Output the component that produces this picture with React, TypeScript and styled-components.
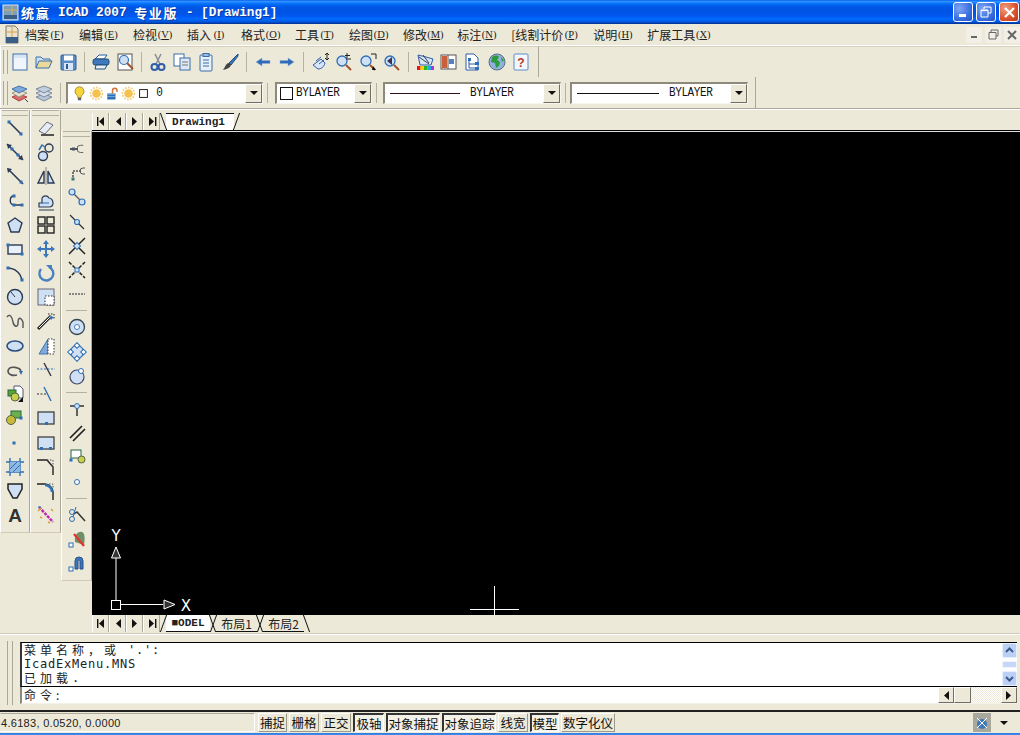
import React from "react";
import styled, { createGlobalStyle } from "styled-components";

const Global = createGlobalStyle`
  html, body { margin: 0; padding: 0; background: #ece9d8; overflow: hidden; }
  * { box-sizing: border-box; }
`;
const cjk = `"Noto Sans CJK SC", "Liberation Sans", sans-serif`;
const D = "#2b3a55", B = "#2f6fb5", L = "#cfe0f5", M = "#7fa8dc", G = "#555";

const Win = styled.div`
  width: 1020px; height: 735px; background: #ece9d8; display: flex; flex-direction: column;
  overflow: hidden; font-family: ${cjk}; color: #111;
`;
const TitleBar = styled.div`
  height: 24px; flex: none; display: flex; align-items: center; padding: 0 1px 0 2px;
  background: linear-gradient(#0058ee 0%, #3593ff 5%, #288eff 8%, #127dff 12%, #036ffc 16%, #0262ee 22%, #0057e5 30%, #0054e3 40%, #0055eb 60%, #005bf5 70%, #026afe 78%, #0062ef 86%, #0052d6 92%, #0040ab 96%, #003092 100%);
`;
const TitleText = styled.div`
  flex: 1; margin-left: 2px; color: #fff; font: bold 12.7px "Liberation Mono", monospace; white-space: pre; letter-spacing: 0;
  text-shadow: 1px 1px 0 #0f3a9c; display: flex; align-items: center;
`;
const TitleCjk = styled.span`
  font: bold 13px ${cjk}; letter-spacing: 1.7px;
`;
const CapBtn = styled.div<{ $red?: boolean }>`
  width: 20px; height: 20px; margin-left: 3px; border: 1px solid #fff; border-radius: 3px;
  display: flex; align-items: center; justify-content: center;
  background: ${p => p.$red
    ? "radial-gradient(circle at 30% 30%, #f0a080, #d9512c 60%, #b93a16)"
    : "radial-gradient(circle at 30% 30%, #7fa6f2, #3a6fe0 60%, #2353c4)"};
`;
const MenuBar = styled.div`
  height: 22px; flex: none; display: flex; align-items: center; padding-left: 4px; border-bottom: 1px solid #fff; box-shadow: 0 1px 0 #d4d0bc;
`;
const MenuList = styled.div`
  display: flex; gap: 14px; margin-left: 6px; flex: 1;
`;
const MenuItem = styled.div`
  font-size: 12px; line-height: 16px; white-space: nowrap; color: #222; display: flex; align-items: center;
`;
const Accel = styled.span`
  display: inline-block; width: 16px; text-align: center; white-space: nowrap; font: 10.5px "Liberation Serif", serif; letter-spacing: 0;
  u { text-decoration: underline; }
`;
const MdiBtn = styled.div`
  width: 16px; height: 16px; margin-left: 3px; display: flex; align-items: center; justify-content: center; background: #f2f0e6;
`;
const ToolRow = styled.div`
  height: 31px; flex: none; display: flex; align-items: stretch;
`;
const ToolRowRule = styled(ToolRow)`
  border-bottom: 1px solid #aca899; box-shadow: 0 1px 0 #fff; height: 32px;
`;
const ToolBand = styled.div<{ $w: number }>`
  width: ${p => p.$w}px; display: flex; align-items: center; padding-left: 2px; border-right: 1px solid #aca899; border-left: 1px solid #fff; position: relative;
`;
const VGrip = styled.div`
  width: 5px; height: 24px; flex: none; margin-right: 0; border-left: 1px solid #aca899; border-right: 1px solid #aca899;
`;
const ToolBtn = styled.div`
  width: 24px; height: 24px; flex: none; display: flex; align-items: center; justify-content: center;
`;
const Sep = styled.div`
  width: 9px; height: 24px; flex: none; position: relative;
  &::after { content: ""; position: absolute; left: 4px; top: 2px; bottom: 2px; width: 1px; background: #b5b2a2; }
`;
const Combo = styled.div<{ $w: number; $ml?: number }>`
  width: ${p => p.$w}px; margin-left: ${p => p.$ml ?? 0}px; height: 22px; flex: none; background: #fff; display: flex; align-items: center;
  border: 1px solid; border-color: #8d8a7c #f6f5ee #f6f5ee #8d8a7c; border-left-width: 2px; border-top-width: 2px;
`;
const ComboBody = styled.div`
  flex: 1; display: flex; align-items: center; height: 100%; padding-left: 3px; min-width: 0;
`;
const ComboArrow = styled.div`
  width: 17px; height: 19px; flex: none; background: #ece9d8; border: 1px solid; border-color: #fff #716f64 #716f64 #fff;
  display: flex; align-items: center; justify-content: center;
`;
const DropTri = styled.i`
  display: block; width: 0; height: 0; border: 4px solid transparent; border-top: 4px solid #111; border-bottom: 0;
`;
const ComboText = styled.span`
  font: 11px "Liberation Mono", monospace; letter-spacing: -0.4px; color: #111; white-space: pre; transform: scaleY(1.1);
`;
const LineSample = styled.i<{ $w: number; $c: string }>`
  display: block; width: ${p => p.$w}px; height: 1px; background: ${p => p.$c}; margin: 0 10px 0 2px; flex: none;
`;
const Swatch = styled.i`
  display: block; width: 13px; height: 13px; border: 1px solid #111; background: #fff; margin: 0 3px 0 0; flex: none;
`;
const Main = styled.div`
  flex: none; display: flex; height: 524px;
`;
const Docks = styled.div`
  width: 92px; flex: none; display: flex; align-items: flex-start;
`;
const Dock = styled.div<{ $w: number; $mt?: number }>`
  width: ${p => p.$w}px; margin-top: ${p => p.$mt ?? 1}px; padding-bottom: 5px; flex: none; display: flex; flex-direction: column; align-items: center;
  border-right: 1px solid #aca899; border-left: 1px solid #fff; border-bottom: 1px solid #cfcbb8;
`;
const HGrip = styled.div`
  height: 6px; width: 90%; flex: none; margin-bottom: 0; border-top: 1px solid #b5b2a2; border-bottom: 1px solid #b5b2a2;
`;
const DockBtn = styled.div`
  height: 24.2px; width: 100%; flex: none; display: flex; align-items: center; justify-content: center;
`;
const DockSep = styled.div`
  height: 9px; width: 70%; flex: none; position: relative;
  &::after { content: ""; position: absolute; left: 0; right: 0; top: 4px; height: 1px; background: #b5b2a2; }
`;
const Work = styled.div`
  flex: 1; min-width: 0; display: flex; flex-direction: column;
`;
const TabRow = styled.div<{ $top?: boolean }>`
  height: ${p => (p.$top ? 22 : 17)}px; flex: none; display: flex; align-items: ${p => (p.$top ? "flex-end" : "stretch")};
  ${p => p.$top ? "border-bottom: 1px solid #000; box-shadow: 0 1px 0 #ddd;" : ""}
`;
const NavBtn = styled.div`
  width: 17px; height: 17px; flex: none; display: flex; align-items: center; justify-content: center;
  border-right: 1px solid #aca899; border-left: 1px solid #fff;
`;
const Tab = styled.div<{ $w: number; $active?: boolean; $top?: boolean }>`
  width: ${p => p.$w}px; height: 17px; flex: none; position: relative; display: flex; align-items: center; justify-content: center;
  z-index: ${p => p.$active ? 2 : 1};
  font-size: 12px; color: #222; background: ${p => p.$active ? "#fff" : "transparent"};
  border-${p => p.$top ? "top" : "bottom"}: 1px solid #111;
  margin-left: 6px; padding-right: ${p => p.$top ? 3 : 0}px;
  &::before, &::after {
    content: ""; position: absolute; ${p => p.$top ? "top: -1px; bottom: 0" : "top: 0; bottom: -1px"}; width: 1px; background: #111;
  }
  &::before { left: -3px; transform: skewX(${p => p.$top ? "20deg" : "-20deg"}); }
  &::after { right: -3px; transform: skewX(${p => p.$top ? "-20deg" : "20deg"}); }
`;
const TabMono = styled.span`
  font: bold 11px "Liberation Mono", monospace; letter-spacing: 0;
`;
const Canvas = styled.div`
  flex: none; height: 483px; background: #000; position: relative; margin-top: 1px;
`;
const CanvasArt = styled.svg`
  position: absolute; left: 0; top: 0; width: 928px; height: 483px;
`;
const Command = styled.div`
  height: 79px; flex: none; display: flex; padding: 8px 3px 0 7px; border-top: 1px solid #cfcbb8; border-bottom: 2px solid #222;
  box-shadow: inset 0 1px 0 #fff;
`;
const CmdGrip = styled.div`
  width: 6px; height: 64px; flex: none; margin-right: 7px; margin-top: -1px; border-left: 1px solid #aca899; border-right: 1px solid #aca899;
`;
const CmdPane = styled.div`
  flex: 1; min-width: 0; display: flex; flex-direction: column;
`;
const CmdOutput = styled.div`
  height: 45px; flex: none; background: #fff; border: 1px solid #000; border-width: 1px 0 1px 1px; border-left: 2px solid #333; display: flex;
`;
const CmdLines = styled.div`
  flex: 1; padding: 0 0 0 2px; font: 12px/14px "DejaVu Sans Mono", monospace; letter-spacing: 0.78px; color: #222; white-space: pre;
`;
const CmdLine = styled.div`
  height: 14px; display: flex; align-items: center;
`;
const WideCjk = styled.span`
  font: 12px/14px ${cjk}; letter-spacing: 4px;
`;
const VScroll = styled.div`
  width: 15px; flex: none; margin-right: 0; display: flex; flex-direction: column; justify-content: space-between; background: #fdfdff;
`;
const VBtn = styled.div`
  height: 15px; background: #bcd0f6; border: 1px solid #e8effc; border-radius: 2px; display: flex; align-items: center; justify-content: center;
`;
const VThumb = styled.div`
  height: 7px; background: #c6d7f7; border: 1px solid #eef3fc; border-radius: 1px;
`;
const Prompt = styled.div`
  height: 17px; flex: none; display: flex; align-items: stretch; background: #fff; border-left: 2px solid #8d8a7c;
  border-bottom: 1px solid #f3f1e8;
`;
const PromptText = styled.div`
  flex: 1; padding-left: 2px; font: 12px/15px ${cjk}; letter-spacing: 4px; color: #222;
`;
const HScroll = styled.div`
  width: 79px; flex: none; display: flex;
  background: repeating-conic-gradient(#ece9d8 0% 25%, #fff 0% 50%) 0 0 / 2px 2px;
`;
const HBtn = styled.div<{ $w?: number; $ml?: number }>`
  width: ${p => p.$w ?? 16}px; margin-left: ${p => p.$ml ?? 0}px; flex: none; background: #ece9d8; border: 1px solid; border-color: #fff #716f64 #716f64 #fff;
  display: flex; align-items: center; justify-content: center;
`;
const Status = styled.div`
  height: 21px; flex: none; display: flex; align-items: center;
`;
const Coords = styled.div`
  width: 255px; height: 19px; flex: none; padding-left: 0; font: 11px/19px "Liberation Sans", sans-serif; letter-spacing: 0.3px; color: #222;
  border: 1px solid; border-color: #aca899 #fff #fff transparent; white-space: pre;
`;
const StatusBtns = styled.div`
  display: flex; gap: 2px; margin-left: 3px;
`;
const StatusBtn = styled.div<{ $on?: boolean; $w: number }>`
  width: ${p => p.$w}px; height: 19px; flex: none; display: flex; align-items: center; justify-content: center;
  font-size: 12.5px; line-height: 17px; color: #111; white-space: nowrap;
  border: 1px solid; border-color: ${p => p.$on ? "#333 #fff #fff #333" : "#fff #9d9a8a #9d9a8a #fff"};
  ${p => p.$on ? "border-width: 2px 1px 1px 2px; background: #f3f1e7;" : ""}
`;
const StatusTail = styled.div`
  flex: 1; display: flex; align-items: center; justify-content: flex-end; padding-right: 12px; gap: 9px;
`;
const TrayIcon = styled.div`
  width: 18px; height: 19px; background: #a8a89c; display: flex; align-items: center; justify-content: center;
`;
const TaskEdge = styled.div`
  flex: 1; background: linear-gradient(#2f7be0, #3f8cf0);
`;

const S = ({ c, s = 20 }: { c: React.ReactNode; s?: number }) => (
  <svg width={s} height={s} viewBox="0 0 20 20" fill="none">{c}</svg>
);
const node = (x: number, y: number, c = B) => <rect x={x - 1.5} y={y - 1.5} width="3" height="3" fill={c} />;
const mag = (x = 8, y = 8) => <><circle cx={x} cy={y} r="5" fill={L} stroke={B} strokeWidth="1.3" /><path d={`M${x + 4} ${y + 4}l5 5`} stroke="#a0522d" strokeWidth="2" /></>;

const I: Record<string, React.ReactNode> = {
  new: <><rect x="3" y="2" width="14" height="16" fill="#f0f5fc" stroke="#3b6ea8" /><path d="M4 3h12v3H4z" fill="#d7e5f6" /></>,
  open: <><path d="M2 16V5h5l2 2h7v2" fill="#cfe0f5" stroke="#3b6ea8" /><path d="M2 16l3-7h13l-3 7z" fill="#e9d99a" stroke="#3b6ea8" /></>,
  save: <><rect x="3" y="3" width="15" height="15" rx="1" fill="#5a8cc7" stroke="#2b5c97" /><rect x="6" y="3.5" width="9" height="5" fill="#fff" /><rect x="6" y="11" width="9" height="7" fill="#d7e5f6" /><rect x="8" y="12" width="2" height="5" fill="#2b5c97" /></>,
  print: <><path d="M4 7l4-4h8l-3 4z" fill="#fff" stroke="#2b5c97" /><rect x="2" y="7" width="16" height="6" rx="2" fill="#3f78bb" stroke="#1f4e79" /><path d="M5 13h11l-2 4H4z" fill="#e8eef7" stroke="#1f4e79" /></>,
  preview: <><rect x="3" y="2" width="14" height="16" fill="#fff" stroke="#555" /><circle cx="9" cy="8" r="4.5" fill={L} stroke={B} strokeWidth="1.2" /><path d="M12 11l6 6" stroke="#a0522d" strokeWidth="2" /></>,
  cut: <><path d="M7 2l5 10M13 2L8 12" stroke="#8a8f99" strokeWidth="1.6" /><circle cx="6.5" cy="15" r="3" stroke="#2f5da8" strokeWidth="2" /><circle cx="13.5" cy="15" r="3" stroke="#2f5da8" strokeWidth="2" /></>,
  copy: <><rect x="2" y="2" width="10" height="12" fill="#fff" stroke="#3b6ea8" /><rect x="8" y="6" width="10" height="12" fill="#dfe9f6" stroke="#3b6ea8" /><path d="M10 10h6M10 13h6" stroke="#777" /></>,
  paste: <><rect x="4" y="3" width="12" height="16" rx="1" fill="#e7eff9" stroke="#3b6ea8" /><rect x="7" y="1.5" width="6" height="3" fill="#9ab9e0" stroke="#3b6ea8" /><path d="M7 8h6M7 11h6M7 14h6" stroke="#3b6ea8" /></>,
  brush: <><path d="M18 2L9 11l2 2 7-9z" fill="#3f78bb" stroke="#1f4e79" /><path d="M9 11c-3 0-3 3-6 7 4-1 7-2 8-5z" fill="#444" /></>,
  back: <path d="M3 10l6-4v2.500h8v3H9V14z" fill="#2f69b8" stroke="#8db0dd" strokeWidth=".5" />,
  fwd: <path d="M17 10l-6-4v2.500H3v3h8V14z" fill="#2f69b8" stroke="#8db0dd" strokeWidth=".5" />,
  hand: <><path d="M3 13l8-6 4 4c-1 4-4 6-7 6z" fill="#d7e5f6" stroke="#2f5da8" /><path d="M6 9l5-4M9 12l5-4" stroke="#2f5da8" /><path d="M17 1v7M15 3l2-2 2 2M15 6l2 2 2-2" stroke="#222" /></>,
  zoomp: <>{mag(8, 9)}<path d="M13 1v5M11 3.500h5M12 7h5" stroke="#222" /></>,
  zoomw: <>{mag(8, 9)}<path d="M13 2h5v5" stroke="#222" /><path d="M15 14l3 4h-4z" fill="#111" /></>,
  zoomo: <>{mag(8, 9)}<path d="M5 9l5-4v8z" fill="#335" /></>,
  color: <><rect x="2" y="14" width="3.5" height="4" fill="#e11" /><rect x="5.5" y="14" width="3.5" height="4" fill="#fc0" /><rect x="9" y="14" width="3.5" height="4" fill="#2b2" /><rect x="12.5" y="14" width="3.5" height="4" fill="#2ad" /><rect x="16" y="14" width="3" height="4" fill="#a3d" /><path d="M3 3l8 2 7 2-2 6H5z" fill="#d7e5f6" stroke="#2f5da8" /><path d="M4 5l10 7M8 3l6 8" stroke="#345" /></>,
  props: <><rect x="2" y="3" width="15" height="14" fill="#fff" stroke="#555" /><rect x="3" y="4" width="5" height="12" fill="#c9603a" /><rect x="10" y="7" width="5" height="5" fill="#5a7fc0" /><path d="M9 3v14" stroke="#555" /></>,
  design: <><path d="M3 2h8l4 4v12H3z" fill="#fff" stroke="#2f5da8" /><path d="M6 8v8h6M6 12h6" stroke="#2f5da8" /><rect x="5" y="6" width="3" height="3" fill={B} /><rect x="12" y="10" width="4" height="3" fill={B} /><rect x="12" y="15" width="4" height="3" fill={B} /></>,
  globe: <><circle cx="10" cy="10" r="8" fill="#8fb2dc" stroke="#5b6d84" /><path d="M5 5c3-2 6-2 7 0l-2 3 3 2-1 4-3 2-1-5-4-1zM14 5l3 3-2 2z" fill="#2e9a3e" /></>,
  help: <><rect x="3" y="2" width="14" height="16" rx="1" fill="#f3f6fb" stroke="#5a8cc7" /><text x="10" y="15" textAnchor="middle" fontFamily="Liberation Sans" fontWeight="700" fontSize="12" fill="#b3382c">?</text></>,
  layers: <><path d="M2 14l7-3 8 3-8 4z" fill="#d96a6a" stroke="#a44" /><path d="M2 10l7-3 8 3-8 4z" fill="#e8e0c8" stroke="#998" /><path d="M2 6l7-3 8 3-8 4z" fill="#7fa8dc" stroke="#47a" /><path d="M15 16l3 3" stroke="#246" /></>,
  layers2: <><path d="M2 14l8-3 8 3-8 4z" fill="#b8c6d8" stroke="#7b8a9c" /><path d="M2 10l8-3 8 3-8 4z" fill="#d4dde8" stroke="#7b8a9c" /><path d="M2 6l8-3 8 3-8 4z" fill="#c2cfdf" stroke="#7b8a9c" /></>,
  bulb: <><path d="M10 2a5.500 5.500 0 0 0-3 10c1 1 1 2 1 3h4c0-1 0-2 1-3a5.500 5.500 0 0 0-3-10z" fill="#f6d43c" stroke="#a8862a" /><rect x="8" y="15" width="4" height="3" fill="#666" /></>,
  sun: <><circle cx="10" cy="10" r="5" fill="#f4c24c" /><circle cx="10" cy="10" r="7" stroke="#f0cd7a" strokeWidth="2" strokeDasharray="2 1.5" /></>,
  lock: <><rect x="3" y="10" width="11" height="8" fill="#2f6fb5" /><path d="M3 11h11M3 14h11" stroke="#8fb7e3" /><path d="M10 10V6a3 3 0 0 1 6 0v2" stroke="#d2743a" strokeWidth="2" /></>,
  sq: <rect x="4" y="4" width="12" height="12" fill="#fff" stroke="#111" strokeWidth="1.4" />,
  line: <><path d="M4 4l12 12" stroke={D} strokeWidth="1.6" />{node(4, 4)}{node(16, 16)}</>,
  xline: <><path d="M2 2l16 16" stroke={D} strokeWidth="1.6" />{node(7, 7)}{node(13, 13)}<path d="M2 2l5 1-4 4zM18 18l-5-1 4-4z" fill={D} /></>,
  ray: <><path d="M3 3l15 15" stroke={D} strokeWidth="1.6" />{node(16, 16)}<path d="M2 2l5 1-4 4z" fill={D} /></>,
  pline: <><path d="M9 5C4 5 4 14 9 14h9" stroke={D} strokeWidth="1.4" />{node(9, 5)}{node(9, 14)}{node(17, 14)}</>,
  polygon: <path d="M10 3l7 5-3 9H6L3 8z" fill={L} stroke={D} strokeWidth="1.4" />,
  rect: <><rect x="3" y="6" width="14" height="9" fill="#e9f0fa" stroke={D} strokeWidth="1.4" />{node(3, 6)}{node(17, 15)}</>,
  arc: <><path d="M2 5c8 0 14 5 15 13" stroke={D} strokeWidth="1.6" />{node(3, 5)}{node(17, 17)}</>,
  circle: <><circle cx="10" cy="10" r="7.5" fill={L} stroke={D} strokeWidth="1.4" /><path d="M10 10L6 5" stroke={D} /></>,
  spline: <path d="M2 5c3-4 5 0 6 5s5 6 5 1 2-7 5-1v6" stroke={G} strokeWidth="1.4" />,
  ellipse: <ellipse cx="10" cy="10" rx="8" ry="5" fill={L} stroke="#2c4f80" strokeWidth="1.6" />,
  earc: <><path d="M16 12c0-5-12-7-13-1 0 4 5 5 9 4" stroke={G} strokeWidth="1.6" /><path d="M14 11l4 0-2 4z" fill={B} /></>,
  insert: <><path d="M9 2h6l3 3v9H9z" fill="#fff" stroke="#557" /><rect x="3" y="6" width="8" height="6" fill="#5aa52f" stroke="#264" /><circle cx="10" cy="13" r="4" fill="#c7d24a" stroke="#564" /><path d="M13 18l5-5v5z" fill="#111" /></>,
  block: <><rect x="6" y="3" width="10" height="7" fill="#6bb04a" stroke="#264" /><circle cx="6" cy="12" r="4.5" fill="#c7b93a" stroke="#564" />{node(16, 10)}</>,
  point: <rect x="7.5" y="8.5" width="3" height="3" fill={B} />,
  hatch: <><path d="M5 1v18M15 1v18M1 5h18M1 15h18" stroke="#2f6fb5" strokeWidth="1.4" /><rect x="5" y="5" width="10" height="10" fill="#8fb7e3" /><path d="M5 12l7-7M8 15l7-7" stroke="#2f6fb5" /></>,
  region: <path d="M3 3h14v5l-5 9H8L3 8z" fill={L} stroke="#222" strokeWidth="1.5" />,
  text: <text x="10" y="17" textAnchor="middle" fontFamily="Liberation Sans" fontWeight="700" fontSize="19" fill="#333">A</text>,
  erase: <><path d="M3 13l8-9 6 3-8 9z" fill="#e5ecf5" stroke="#667" /><path d="M5 17h13" stroke="#111" strokeWidth="1.4" /></>,
  dup: <><circle cx="13" cy="6" r="4" stroke={D} strokeWidth="1.4" /><circle cx="7" cy="14" r="4.5" fill={L} stroke={D} strokeWidth="1.4" /><path d="M3 8l3-5 3 2" stroke={B} strokeWidth="1.5" /></>,
  mirror: <><path d="M10 1v18" stroke="#888" /><path d="M8 5v12H2z" fill="none" stroke={D} strokeWidth="1.4" /><path d="M12 5v12h6z" fill={L} stroke={D} strokeWidth="1.4" /></>,
  offset: <><path d="M3 16v-4h3V7a4 4 0 0 1 7 0c2 0 4 2 4 5s-2 4-4 4z" fill={L} stroke={D} strokeWidth="1.2" /><path d="M3 19h15" stroke={D} /><path d="M6 12h7" stroke={B} /></>,
  array: <><rect x="2" y="2" width="7" height="7" stroke="#222" strokeWidth="1.4" /><rect x="11" y="2" width="7" height="7" stroke="#222" strokeWidth="1.4" /><rect x="2" y="11" width="7" height="7" stroke="#222" strokeWidth="1.4" /><rect x="11" y="11" width="7" height="7" stroke="#222" strokeWidth="1.4" /></>,
  move: <path d="M10 1l3 4h-2v4h4V7l4 3-4 3v-2h-4v4h2l-3 4-3-4h2v-4H5v2l-4-3 4-3v2h4V5H7z" fill="#3b78bd" />,
  rotate: <><path d="M13 4a7 7 0 1 1-8 2" stroke="#4a7fc0" strokeWidth="2.4" /><path d="M10 2h6v6z" fill="#4a7fc0" /></>,
  scale: <><rect x="2" y="2" width="16" height="16" fill={L} stroke="#667" /><rect x="9" y="9" width="9" height="9" fill="#fff" stroke="#333" strokeDasharray="1.5 1.5" /></>,
  stretch: <><path d="M2 17L15 4" stroke="#222" strokeWidth="3" /><path d="M3 16L15 4" stroke="#fff" strokeWidth="1" /><path d="M12 2h6v6" stroke="#222" strokeDasharray="1.5 1.5" /><path d="M13 4l5 1-3 3z" fill={B} /></>,
  lengthen: <><path d="M3 18L12 3v15z" fill={M} stroke="#47a" /><rect x="12" y="3" width="6" height="15" fill="#fff" stroke="#333" strokeDasharray="1.5 1.5" /></>,
  trim: <><path d="M1 9h18" stroke={B} strokeDasharray="2 1.5" /><path d="M8 3l7 13" stroke="#334" strokeWidth="1.4" /></>,
  extend: <><path d="M1 10h9" stroke="#333" strokeDasharray="2 1.5" /><path d="M8 3l7 14" stroke={B} strokeWidth="1.4" /></>,
  break1: <><rect x="2" y="4" width="16" height="12" fill={L} stroke="#333" strokeWidth="1.2" /><rect x="9" y="14" width="3" height="3" fill={B} /></>,
  break2: <><rect x="2" y="4" width="16" height="12" fill={L} stroke="#333" strokeWidth="1.2" /><rect x="4" y="14" width="3" height="3" fill={B} /><rect x="13" y="14" width="3" height="3" fill={B} /></>,
  chamfer: <><path d="M1 3h10l6 7v8" stroke="#222" strokeWidth="1.4" /><path d="M11 3h6v7" stroke="#555" strokeDasharray="1.5 1.5" /></>,
  fillet: <><path d="M1 3h8c4 0 8 4 8 8v8" stroke="#222" strokeWidth="1.4" /><path d="M9 4c4 0 7 3 7 7" stroke="#2f6fb5" strokeWidth="2.5" /><path d="M13 3h4v4" stroke="#555" strokeDasharray="1.5 1.5" /></>,
  explode: <><path d="M3 2l14 15" stroke="#c023b0" strokeWidth="2.4" strokeDasharray="3 1" /><path d="M2 6l3-3M15 4l2 2M4 12l2 1M12 17l2 1" stroke="#d4a03a" strokeWidth="1.4" /><path d="M2 2l3 0" stroke="#47a" /></>,
  endp: <><path d="M3 10h8" stroke="#555" strokeWidth="2" /><rect x="5" y="8.5" width="3" height="3" fill="#456" /><path d="M18 6h-3a4 4 0 0 0 0 8h3" stroke="#555" transform="scale(.9) translate(0 1)" /></>,
  corner: <><path d="M6 17V8h9" stroke="#555" strokeWidth="1.6" strokeDasharray="2 1" />{node(6, 16, "#477")}<path d="M18 5h-2a3 3 0 0 0 0 6h2" stroke="#555" /></>,
  ext: <><path d="M3 3l14 14" stroke={G} strokeWidth="1.3" /><circle cx="5" cy="5" r="3" fill={L} stroke={B} strokeWidth="1.2" /><circle cx="15" cy="15" r="3" fill={L} stroke={B} strokeWidth="1.2" /></>,
  mid: <><path d="M3 3l14 14" stroke="#333" strokeWidth="1.3" /><circle cx="10" cy="10" r="2.5" fill={L} stroke={B} strokeWidth="1.2" /></>,
  inter: <><path d="M2 2l16 16M18 2L2 18" stroke="#222" strokeWidth="1.5" /><rect x="7.5" y="7.5" width="5" height="5" transform="rotate(45 10 10)" fill={L} stroke={B} /></>,
  app: <><path d="M2 2l16 16M18 2L2 18" stroke="#222" strokeWidth="1.5" strokeDasharray="3.5 1.5" /><rect x="8" y="8" width="4" height="4" fill={L} stroke={B} /></>,
  none: <path d="M2 10h16" stroke="#666" strokeWidth="1.5" strokeDasharray="2 1" />,
  center: <><circle cx="10" cy="10" r="7.5" fill={L} stroke="#345" strokeWidth="1.3" /><circle cx="10" cy="10" r="2.5" fill="#fff" stroke="#4a7fc0" /></>,
  quad: <><circle cx="10" cy="10" r="6.5" fill={L} stroke={B} strokeWidth="1.2" /><g fill="#fff" stroke={B}><rect x="8" y="1.5" width="4" height="4" transform="rotate(45 10 3.5)" /><rect x="8" y="14.5" width="4" height="4" transform="rotate(45 10 16.5)" /><rect x="1.5" y="8" width="4" height="4" transform="rotate(45 3.5 10)" /><rect x="14.5" y="8" width="4" height="4" transform="rotate(45 16.5 10)" /></g></>,
  tan: <><circle cx="10" cy="11" r="7" fill={L} stroke="#446" strokeWidth="1.2" /><circle cx="14" cy="5" r="2.5" fill="#fff" stroke={B} /></>,
  perp: <><path d="M3 7h14M10 7v10" stroke="#333" strokeWidth="1.5" /><circle cx="10" cy="7" r="2.5" fill={L} stroke={B} /></>,
  para: <path d="M3 15L15 3M6 18L18 6" stroke="#222" strokeWidth="1.7" />,
  ins2: <><rect x="4" y="3" width="10" height="8" fill="#fff" stroke="#264" /><rect x="11" y="9" width="7" height="7" rx="3.5" fill="#c7d24a" stroke="#564" />{node(4, 13)}</>,
  node: <circle cx="10" cy="10" r="2.5" fill="#fff" stroke={B} />,
  near: <><circle cx="5" cy="7" r="2.5" stroke={B} /><circle cx="5" cy="14" r="2.5" stroke={B} /><path d="M7 9l3-2 8 9" stroke="#333" strokeWidth="1.5" /><path d="M9 2L6 12" stroke={B} /></>,
  clear: <><path d="M8 13C7 6 11 2 15 3c3 1 3 6 2 13" fill="#6f8f6a" /><path d="M7 5l10 12" stroke="#e0362c" strokeWidth="2.2" /><rect x="2" y="14" width="4" height="4" fill="#fff" stroke={B} /></>,
  magnet: <><path d="M8 16V8a4 4 0 0 1 8 0v8h-3V8a1 1 0 0 0-2 0v8z" fill="#3f78bb" stroke="#254f8a" /><rect x="2" y="14" width="4" height="4" fill="#fff" stroke={B} /></>,
};

const col1 = ["line", "xline", "ray", "pline", "polygon", "rect", "arc", "circle", "spline", "ellipse", "earc", "insert", "block", "point", "hatch", "region", "text"];
const col2 = ["erase", "dup", "mirror", "offset", "array", "move", "rotate", "scale", "stretch", "lengthen", "trim", "extend", "break1", "break2", "chamfer", "fillet", "explode"];
const col3 = ["endp", "corner", "ext", "mid", "inter", "app", "none", "|", "center", "quad", "tan", "|", "perp", "para", "ins2", "node", "|", "near", "clear", "magnet"];
const tb1 = ["new", "open", "save", "|", "print", "preview", "|", "cut", "copy", "paste", "brush", "|", "back", "fwd", "|", "hand", "zoomp", "zoomw", "zoomo", "|", "color", "props", "design", "globe", "help"];

const menus: [string, string][] = [
  ["档案", "F"], ["编辑", "E"], ["检视", "V"], ["插入", "I"], ["格式", "O"], ["工具", "T"], ["绘图", "D"],
  ["修改", "M"], ["标注", "N"], ["[线割计价", "P"], ["说明", "H"], ["扩展工具", "X"],
];
const status: [string, number, boolean?][] = [
  ["捕捉", 29], ["栅格", 30], ["正交", 30], ["极轴", 31, true], ["对象捕捉", 54, true], ["对象追踪", 54, true],
  ["线宽", 30], ["模型", 29, true], ["数字化仪", 54],
];

const Tri = ({ d, bar }: { d: "l" | "r"; bar?: boolean }) => (
  <svg width="10" height="11" viewBox="0 0 10 11">
    {d === "l" ? <path d="M8 1v9L3 5.500z" fill="#111" /> : <path d="M2 1v9l5-4.500z" fill="#111" />}
    {bar && <rect x={d === "l" ? 1 : 8} y="1" width="1.4" height="9" fill="#111" />}
  </svg>
);
const Nav = () => (
  <>
    <NavBtn><Tri d="l" bar /></NavBtn>
    <NavBtn><Tri d="l" /></NavBtn>
    <NavBtn><Tri d="r" /></NavBtn>
    <NavBtn><Tri d="r" bar /></NavBtn>
  </>
);
const Chev = ({ up }: { up?: boolean }) => (
  <svg width="9" height="7" viewBox="0 0 9 7"><path d={up ? "M1 5l3.500-3.500L8 5" : "M1 2l3.500 3.500L8 2"} stroke="#3c5a8c" strokeWidth="2" fill="none" /></svg>
);

export default function App() {
  return (
    <Win>
      <Global />
      <TitleBar>
        <svg width="17" height="17" viewBox="0 0 17 17"><rect x="1" y="1" width="15" height="15" fill="#7f9fb8" stroke="#dfe6ee" /><path d="M2 11h13v4H2z" fill="#3a5e86" /><path d="M10 1v10M2 6h14" stroke="#d8b25a" /></svg>
        <TitleText><TitleCjk>统赢</TitleCjk>{" ICAD 2007 "}<TitleCjk>专业版</TitleCjk>{" - [Drawing1]"}</TitleText>
        <CapBtn><svg width="12" height="12" viewBox="0 0 12 12"><rect x="2" y="8" width="7" height="3" fill="#fff" /></svg></CapBtn>
        <CapBtn><svg width="12" height="12" viewBox="0 0 12 12"><path d="M4 3V1h7v6H8M1 4h7v7H1z M1 4.600h7" stroke="#fff" fill="none" /></svg></CapBtn>
        <CapBtn $red><svg width="13" height="13" viewBox="0 0 13 13"><path d="M2 2l9 9M11 2l-9 9" stroke="#fff" strokeWidth="2.2" /></svg></CapBtn>
      </TitleBar>
      <MenuBar>
        <svg width="15" height="19" viewBox="0 0 15 19"><path d="M2 1h9l3 3v14H2z" fill="#e8e3cf" stroke="#777" /><path d="M2 12h12v6H2z" fill="#3a5e86" /><path d="M8 1v11M2 7h12" stroke="#d8a24a" /></svg>
        <MenuList>
          {menus.map(([t, k]) => (
            <MenuItem key={k}>{t}<Accel>(<u>{k}</u>)</Accel></MenuItem>
          ))}
        </MenuList>
        <MdiBtn><svg width="9" height="9" viewBox="0 0 9 9"><rect x="1" y="6" width="6" height="2" fill="#666" /></svg></MdiBtn>
        <MdiBtn><svg width="11" height="11" viewBox="0 0 11 11"><path d="M3 3V1h7v6H8M1 3.500h7V10H1z" stroke="#666" fill="none" /></svg></MdiBtn>
        <MdiBtn><svg width="10" height="10" viewBox="0 0 10 10"><path d="M1 1l8 8M9 1l-8 8" stroke="#666" strokeWidth="2" /></svg></MdiBtn>
      </MenuBar>
      <ToolRow>
        <ToolBand $w={539}>
          <VGrip />
          {tb1.map((n, i) => n === "|" ? <Sep key={i} /> : <ToolBtn key={i}><S c={I[n]} /></ToolBtn>)}
        </ToolBand>
      </ToolRow>
      <ToolRowRule>
        <ToolBand $w={756}>
          <VGrip />
          <ToolBtn><S c={I.layers} /></ToolBtn>
          <ToolBtn><S c={I.layers2} /></ToolBtn>
          <Sep />
          <Combo $w={197} $ml={1}>
            <ComboBody>
              <S s={17} c={I.bulb} /><S s={17} c={I.sun} /><S s={15} c={I.lock} /><S s={17} c={I.sun} /><S s={13} c={I.sq} />
              <ComboText> 0</ComboText>
            </ComboBody>
            <ComboArrow><DropTri /></ComboArrow>
          </Combo>
          <Sep />
          <Combo $w={97} $ml={3}>
            <ComboBody><Swatch /><ComboText>BYLAYER</ComboText></ComboBody>
            <ComboArrow><DropTri /></ComboArrow>
          </Combo>
          <Sep />
          <Combo $w={178} $ml={2}>
            <ComboBody><LineSample $w={70} $c="#30101c" /><ComboText>BYLAYER</ComboText></ComboBody>
            <ComboArrow><DropTri /></ComboArrow>
          </Combo>
          <Sep />
          <Combo $w={178}>
            <ComboBody><LineSample $w={82} $c="#111" /><ComboText>BYLAYER</ComboText></ComboBody>
            <ComboArrow><DropTri /></ComboArrow>
          </Combo>
        </ToolBand>
      </ToolRowRule>
      <Main>
        <Docks>
          <Dock $w={30}>
            <HGrip />
            {col1.map(n => <DockBtn key={n}><S c={I[n]} /></DockBtn>)}
          </Dock>
          <Dock $w={31}>
            <HGrip />
            {col2.map(n => <DockBtn key={n}><S c={I[n]} /></DockBtn>)}
          </Dock>
          <Dock $w={31} $mt={22}>
            <HGrip />
            {col3.map((n, i) => n === "|" ? <DockSep key={i} /> : <DockBtn key={i}><S c={I[n]} /></DockBtn>)}
          </Dock>
        </Docks>
        <Work>
          <TabRow $top>
            <Nav />
            <Tab $w={68} $active $top><TabMono>Drawing1</TabMono></Tab>
          </TabRow>
          <Canvas>
            <CanvasArt viewBox="92 132 928 483">
              <g stroke="#fff" fill="none" strokeWidth="1">
                <rect x="111.5" y="600.5" width="9" height="9" />
                <path d="M116 600V558M121 604.500H163" />
                <path d="M116 547l-4.500 11h9z M164 600l11 4.500-11 4.500z" fill="#333" />
                <path d="M470 609.500h49M494.500 586v29" />
              </g>
              <text x="116" y="541" textAnchor="middle" fontFamily="DejaVu Sans" fontSize="15" fill="#fff">Y</text>
              <text x="186" y="611" textAnchor="middle" fontFamily="DejaVu Sans" fontSize="15" fill="#fff">X</text>
            </CanvasArt>
          </Canvas>
          <TabRow>
            <Nav />
            <Tab $w={44} $active><TabMono>■ODEL</TabMono></Tab>
            <Tab $w={41}>布局1</Tab>
            <Tab $w={41}>布局2</Tab>
          </TabRow>
        </Work>
      </Main>
      <Command>
        <CmdGrip />
        <CmdPane>
          <CmdOutput>
            <CmdLines>
              <CmdLine><WideCjk>菜单名称，或</WideCjk> '.':</CmdLine>
              <CmdLine>IcadExMenu.MNS</CmdLine>
              <CmdLine><WideCjk>已加载</WideCjk>.</CmdLine>
            </CmdLines>
            <VScroll>
              <VBtn><Chev up /></VBtn>
              <VThumb />
              <VBtn><Chev /></VBtn>
            </VScroll>
          </CmdOutput>
          <Prompt>
            <PromptText>命令:</PromptText>
            <HScroll>
              <HBtn><Tri d="l" /></HBtn>
              <HBtn $w={17} />
              <HBtn $ml={30}><Tri d="r" /></HBtn>
            </HScroll>
          </Prompt>
        </CmdPane>
      </Command>
      <Status>
        <Coords>4.6183, 0.0520, 0.0000</Coords>
        <StatusBtns>
          {status.map(([t, w, on]) => <StatusBtn key={t} $w={w} $on={on}>{t}</StatusBtn>)}
        </StatusBtns>
        <StatusTail>
          <TrayIcon><svg width="16" height="16" viewBox="0 0 16 16"><circle cx="8" cy="9" r="5" fill="#3f78bb" /><path d="M3 3l10 10M13 3L3 13" stroke="#fff" /></svg></TrayIcon>
          <DropTri />
        </StatusTail>
      </Status>
      <TaskEdge />
    </Win>
  );
}
